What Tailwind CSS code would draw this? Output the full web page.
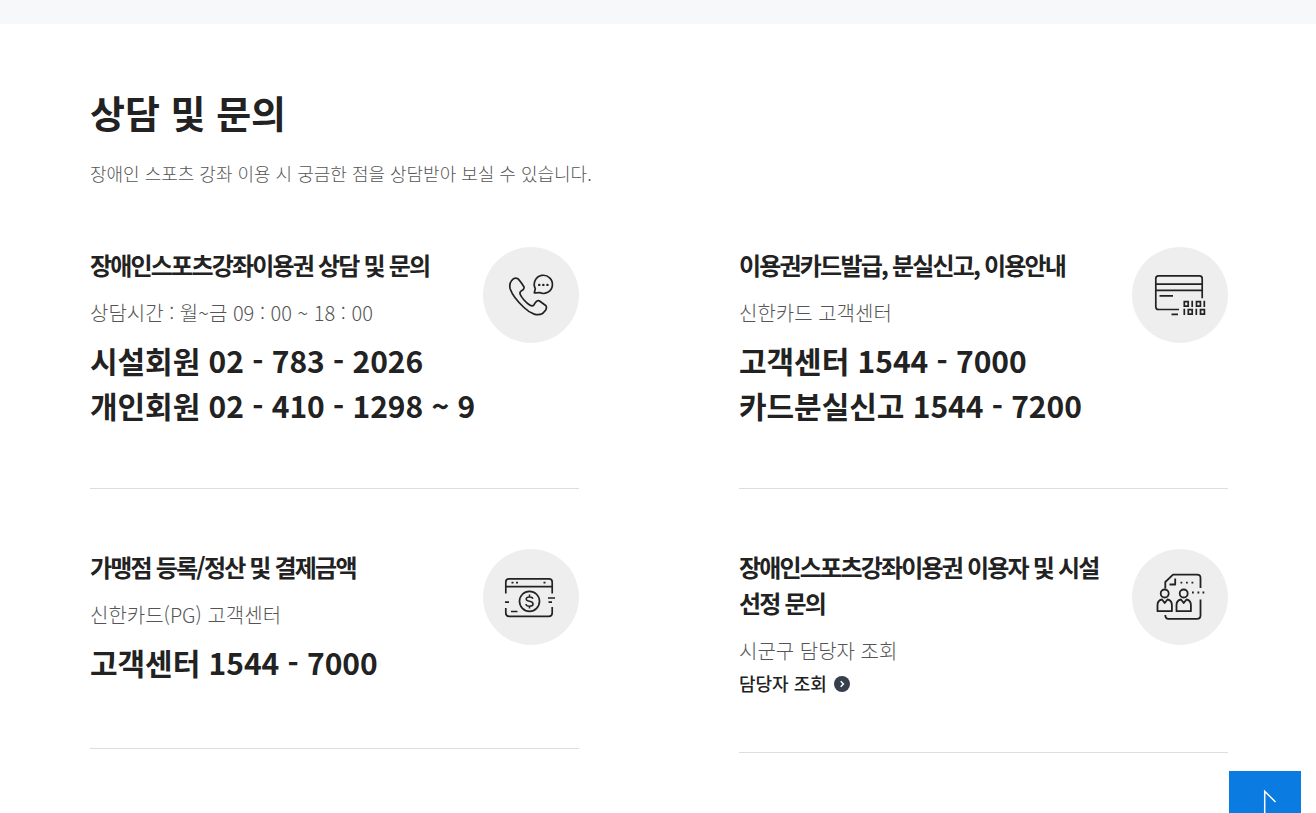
<!DOCTYPE html>
<html lang="ko">
<head>
  <meta charset="UTF-8">
  <meta name="viewport" content="width=device-width, initial-scale=1.0">
  <title>상담 및 문의</title>
  <script src="https://cdn.jsdelivr.net/npm/@tailwindcss/browser@4"></script>
</head>
<body class="h-screen overflow-hidden bg-white font-['Noto_Sans_CJK_KR',sans-serif] text-[#222]">
  <div class="h-6 bg-[#f6f8fa]"></div>

  <section class="pt-[59px] pl-[90px] pr-[88px]">
    <h2 class="text-[38px] leading-[57px] font-bold">상담 및 문의</h2>
    <p class="mt-5 text-[18px] leading-[27px] font-light tracking-[-0.01px] text-[#555]">장애인 스포츠 강좌 이용 시 궁금한 점을 상담받아 보실 수 있습니다.</p>

    <div class="mt-[60px] grid grid-cols-2 items-start gap-x-40 gap-y-[60px]">
      <div class="flex h-[242px] items-start justify-between border-b border-[#ddd]">
        <div>
          <h3 class="text-2xl leading-9 font-bold tracking-[-1.8px]">장애인스포츠강좌이용권 상담 및 문의</h3>
          <p class="mt-[15px] text-[20px] leading-[30px] font-light text-[#555]">상담시간 : 월~금 09 : 00 ~ 18 : 00</p>
          <p class="mt-2.5 text-[30px] leading-[45px] font-bold tracking-[-0.04px] whitespace-nowrap">시설회원 02 - 783 - 2026<br>개인회원 02 - 410 - 1298 ~ 9</p>
        </div>
        <svg class="size-24 shrink-0" viewBox="0 0 96 96" fill="none" stroke="#222" stroke-width="1.7" stroke-linecap="round" stroke-linejoin="round">
          <circle cx="48" cy="48" r="48" fill="#eee" stroke="none"/>
          <path d="M28.500 33.700C30 31.500 32.500 30.700 34.500 31.500C36.800 33 39 36.800 41 40C41.600 42 40 43 38.200 44C35.500 45.500 37.500 49 41 53C45 57.500 48.800 60.200 50.800 58.200C52.200 55.500 53.700 53 56.200 53.800L63 58.800C64.200 61 62.500 64 59.500 66.500C55 69 48 67.500 41 60.500C34 54 29.500 48.500 27.200 42C26.300 38.300 26.800 35.700 28.500 33.700Z"/>
          <path d="M51.300 46L52.300 41.600A9.100 9.100 0 1 1 56.500 45.600Z"/>
          <path d="M56.200 37.900h.1M60.300 37.900h.1M64.400 37.900h.1" stroke-width="2.400"/>
        </svg>
      </div>

      <div class="flex h-[242px] items-start justify-between border-b border-[#ddd]">
        <div>
          <h3 class="text-2xl leading-9 font-bold tracking-[-1.8px]">이용권카드발급, 분실신고, 이용안내</h3>
          <p class="mt-[15px] text-[20px] leading-[30px] font-light text-[#555]">신한카드 고객센터</p>
          <p class="mt-2.5 text-[30px] leading-[45px] font-bold tracking-[-0.04px] whitespace-nowrap">고객센터 1544 - 7000<br>카드분실신고 1544 - 7200</p>
        </div>
        <svg class="size-24 shrink-0" viewBox="0 0 96 96" fill="none" stroke="#222" stroke-width="1.7">
          <circle cx="48" cy="48" r="48" fill="#eee" stroke="none"/>
          <path d="M47 62.500H26.500Q23.800 62.500 23.800 59.700V31.500Q23.800 28.800 26.500 28.800H67.500Q70.200 28.800 70.200 31.500V51.300M24 37.200H70M24 43.400H70M27.500 48.800H41M39.500 67.300H46"/>
          <path d="M52.300 54.600h3.900v4.600h-3.900zM64.500 54.600h3.900v4.600h-3.900zM60.200 53.700v6.400M72.300 53.700v6.400M56.300 62.600h3.900v4.600h-3.900zM68.500 62.600h3.900v4.600h-3.900zM52.300 61.700v6.400M64.300 61.700v6.400" stroke-width="1.700"/>
        </svg>
      </div>

      <div class="flex h-[200px] items-start justify-between border-b border-[#ddd]">
        <div>
          <h3 class="text-2xl leading-9 font-bold tracking-[-1.8px]">가맹점 등록/정산 및 결제금액</h3>
          <p class="mt-[15px] text-[20px] leading-[30px] font-light text-[#555]">신한카드(PG) 고객센터</p>
          <p class="mt-2.5 text-[30px] leading-[45px] font-bold tracking-[-0.04px] whitespace-nowrap">고객센터 1544 - 7000</p>
        </div>
        <svg class="size-24 shrink-0" viewBox="0 0 96 96" fill="none" stroke="#222" stroke-width="1.7">
          <circle cx="48" cy="48" r="48" fill="#eee" stroke="none"/>
          <path d="M22.800 44.500V33Q22.800 29.800 26 29.800H66Q69.200 29.800 69.200 33V44.500M23 37.600H69M22.800 59V64Q22.800 67.300 26 67.300H66Q69.200 67.300 69.200 64V58"/>
          <path d="M28.500 33.700h2M33 33.700h2M60.500 33.700h2M22 53.200h4M65 49h7M65.500 53.200h3.500M28 62.500h6.500"/>
          <circle cx="46.500" cy="52.300" r="10"/>
          <path d="M49.900 49.700Q49.400 47.900 46.500 47.900Q43.200 47.900 43.200 50.100Q43.200 51.900 46.500 52.300Q50.100 52.800 50.100 55Q50.100 57.200 46.500 57.200Q43.200 57.200 42.900 55M46.500 45.500V48M46.500 57V59.500" stroke-width="1.500"/>
        </svg>
      </div>

      <div class="flex h-[204px] items-start justify-between border-b border-[#ddd]">
        <div>
          <h3 class="text-2xl leading-9 font-bold tracking-[-1.8px] whitespace-nowrap">장애인스포츠강좌이용권 이용자 및 시설<br>선정 문의</h3>
          <p class="mt-[15px] text-[20px] leading-[30px] font-light text-[#555]">시군구 담당자 조회</p>
          <a href="#" class="mt-1 flex items-center gap-[7px] text-[18px] leading-[27px] font-medium">
            담당자 조회
            <svg class="size-4" viewBox="0 0 16 16" fill="none">
              <circle cx="8" cy="8" r="8" fill="#363f4d"/>
              <path d="M6.700 5.300L9.400 8L6.700 10.700" stroke="#fff" stroke-width="1.500"/>
            </svg>
          </a>
        </div>
        <svg class="size-24 shrink-0" viewBox="0 0 96 96" fill="none" stroke="#222" stroke-width="1.8" stroke-linejoin="round">
          <circle cx="48" cy="48" r="48" fill="#eee" stroke="none"/>
          <path d="M33.300 39.500V33L41 25.700H65Q68.500 25.700 68.500 29V39M68.500 50.500V66.500Q68.500 69.800 65 69.800H36.500Q33.300 69.800 33.300 66"/>
          <path d="M43.200 29.500V35.500H37.500"/>
          <path d="M48.500 33.700h1.800M54 33.700h1.800M59.500 33.700h1.800M60 43.500h1.800M65.500 43.500h1.800M70.500 43.500h1.800"/>
          <circle cx="32.700" cy="44.500" r="4"/>
          <circle cx="51.700" cy="44.500" r="4"/>
          <path d="M30 50.500Q25.500 51.500 25.500 56V62.200H39.900V56Q39.900 51.500 35.500 50.500L32.700 54ZM49 50.500Q44.500 51.500 44.500 56V62.200H58.900V56Q58.900 51.500 54.500 50.500L51.700 54Z"/>
        </svg>
      </div>
    </div>
  </section>

  <!-- scroll to top -->
  <a href="#" class="fixed top-[771px] right-[15px] flex size-[72px] items-start justify-center bg-[#0a7be0] pt-[18px]">
    <svg class="h-9 w-6" viewBox="0 0 24 36" fill="none" stroke="#fff" stroke-width="1.5">
      <path d="M11.700 36V2.300L22.500 13"/>
    </svg>
  </a>
</body>
</html>
